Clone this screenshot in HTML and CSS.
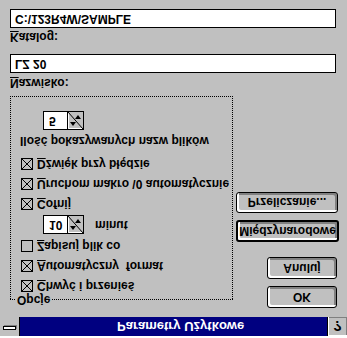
FILE: index.html
```html
<!DOCTYPE html>
<html lang="pl">
<head>
<meta charset="utf-8">
<title>Parametry Użytkowe</title>
<link rel="stylesheet" href="styles.css">
</head>
<body>
<div class="dialog">
  <div class="frame-top"></div>
  <div class="titlebar">
    <div class="sysmenu"><span class="sysbar"></span></div>
    <div class="caption">Parametry Użytkowe</div>
    <div class="help">?</div>
  </div>
  <div class="body">
    <div class="top-row">
      <fieldset class="group">
        <legend>Opcje</legend>
        <div class="group-body">
          <div class="check">
            <svg class="cb" width="12" height="12" viewBox="0 0 12 12"><rect x=".5" y=".5" width="11" height="11" fill="none" stroke="#000"/><path d="M1 1L11 11M11 1L1 11" stroke="#000"/></svg>
            <span><u>C</u>hwyć i przenieś</span>
          </div>
          <div class="check">
            <svg class="cb" width="12" height="12" viewBox="0 0 12 12"><rect x=".5" y=".5" width="11" height="11" fill="none" stroke="#000"/><path d="M1 1L11 11M11 1L1 11" stroke="#000"/></svg>
            <span><u>A</u>utomatyczny&nbsp; format</span>
          </div>
          <div class="check">
            <svg class="cb" width="12" height="12" viewBox="0 0 12 12"><rect x=".5" y=".5" width="11" height="11" fill="none" stroke="#000"/></svg>
            <span><u>Z</u>apisuj plik co</span>
          </div>
          <div class="spin-row">
            <div class="spin">
              <span class="spin-val">10</span>
              <svg class="spin-btn" width="17" height="19" viewBox="0 0 17 19"><rect x=".5" y=".5" width="16" height="18" fill="#c0c0c0" stroke="#000"/><path d="M1.5 17.5V1.5H15.5" fill="none" stroke="#fff"/><path d="M1 18L16 1" stroke="#000"/><path d="M3 8L6 4L9 8Z" fill="#000"/><path d="M8 11H14L11 15Z" fill="#000"/></svg>
            </div>
            <span class="unit">minut</span>
          </div>
          <div class="check">
            <svg class="cb" width="12" height="12" viewBox="0 0 12 12"><rect x=".5" y=".5" width="11" height="11" fill="none" stroke="#000"/><path d="M1 1L11 11M11 1L1 11" stroke="#000"/></svg>
            <span><u>C</u>ofnij</span>
          </div>
          <div class="check">
            <svg class="cb" width="12" height="12" viewBox="0 0 12 12"><rect x=".5" y=".5" width="11" height="11" fill="none" stroke="#000"/><path d="M1 1L11 11M11 1L1 11" stroke="#000"/></svg>
            <span><u>U</u>ruchom makro \0 automatycznie</span>
          </div>
          <div class="check">
            <svg class="cb" width="12" height="12" viewBox="0 0 12 12"><rect x=".5" y=".5" width="11" height="11" fill="none" stroke="#000"/><path d="M1 1L11 11M11 1L1 11" stroke="#000"/></svg>
            <span><u>D</u>źwięk przy błędzie</span>
          </div>
          <div class="count-label">Ilość pokazywanych nazw plików</div>
          <div class="spin count-spin">
            <span class="spin-val">5</span>
            <svg class="spin-btn" width="17" height="19" viewBox="0 0 17 19"><rect x=".5" y=".5" width="16" height="18" fill="#c0c0c0" stroke="#000"/><path d="M1.5 17.5V1.5H15.5" fill="none" stroke="#fff"/><path d="M1 18L16 1" stroke="#000"/><path d="M3 8L6 4L9 8Z" fill="#000"/><path d="M8 11H14L11 15Z" fill="#000"/></svg>
          </div>
        </div>
      </fieldset>
      <div class="buttons">
        <button class="btn btn-ok">OK</button>
        <button class="btn btn-cancel">Anuluj</button>
        <button class="btn btn-default">Międzynarodowe</button>
        <button class="btn btn-recalc">Przeliczanie...</button>
      </div>
    </div>
    <div class="label label-name"><u>N</u>azwisko:</div>
    <div class="field field-name">LZ 20</div>
    <div class="label label-dir"><u>K</u>atalog:</div>
    <div class="field field-dir">C:\123R4W\SAMPLE</div>
  </div>
</div>
</body>
</html>
```
FILE: styles.css
```css
* { box-sizing: border-box; }

html, body {
  margin: 0;
  padding: 0;
  background: #c0c0c0;
}

body {
  width: 347px;
  height: 338px;
  overflow: hidden;
}

.dialog {
  width: 347px;
  height: 338px;
  background: #c0c0c0;
  transform: scaleY(-1);
  font: bold 12px "Liberation Sans", Arial, sans-serif;
  color: #000;
  display: flex;
  flex-direction: column;
}

.frame-top {
  flex: none;
  height: 2px;
  background: #fff;
}

.titlebar {
  flex: none;
  display: flex;
  height: 19px;
}

.sysmenu {
  width: 20px;
  background: #c0c0c0;
  border-right: 1px solid #000;
  display: flex;
  align-items: center;
  justify-content: center;
}

.sysbar {
  width: 13px;
  height: 4px;
  background: #fff;
  border: 1px solid #000;
  box-shadow: 1px 1px 0 #808080;
  margin-top: -3px;
}

.caption {
  flex: 1;
  background: #000080;
  color: #fff;
  font-size: 13px;
  line-height: 19px;
  padding-left: 97px;
  white-space: nowrap;
}

.help {
  width: 20px;
  border-left: 1px solid #000;
  background: #c0c0c0;
  display: flex;
  align-items: center;
  justify-content: center;
  font-size: 14px;
  box-shadow: inset 1px 1px 0 #fff, inset -1px -1px 0 #808080;
}

.body {
  flex: 1;
  display: flex;
  flex-direction: column;
  padding: 0 8px 0 10px;
}

.top-row {
  display: flex;
  margin-top: 9px;
}

.group {
  margin: 2px 0 0;
  padding: 0;
  width: 223px;
  min-width: 0;
  border: 1px dotted #000;
}

.group legend {
  padding: 0 1px;
  margin-left: 5px;
  line-height: 12px;
}

.group-body {
  margin-top: -2px;
  padding: 0 0 14px 10px;
}

.check {
  display: flex;
  align-items: center;
  height: 20px;
  white-space: nowrap;
}

.cb {
  flex: none;
  margin-right: 4px;
}

.spin-row {
  display: flex;
  align-items: center;
  height: 22px;
  padding-left: 22px;
}

.spin {
  display: flex;
  height: 19px;
}

.spin-val {
  width: 24px;
  height: 19px;
  background: #fff;
  border: 1px solid #000;
  border-right: none;
  padding-left: 5px;
  line-height: 17px;
}

.spin-btn {
  flex: none;
  display: block;
}

.unit {
  margin-left: 11px;
}

.count-label {
  margin: 6px 0 0 -1px;
  line-height: 14px;
  white-space: nowrap;
}

.count-spin {
  margin: 4px 0 0 22px;
}

.buttons {
  margin-left: auto;
  width: 106px;
  display: flex;
  flex-direction: column;
  align-items: flex-end;
}

.btn {
  font: inherit;
  color: #000;
  padding: 0;
  border: 1px solid #000;
  border-radius: 3px;
  background: #c0c0c0;
  box-shadow: inset 2px 2px 0 #fff, inset -2px -2px 0 #808080;
  display: flex;
  align-items: center;
  justify-content: center;
  white-space: nowrap;
}

.btn-ok {
  width: 70px;
  height: 22px;
  margin-right: 2px;
}

.btn-cancel {
  width: 70px;
  height: 22px;
  margin-top: 7px;
  margin-right: 2px;
}

.btn-default {
  width: 103px;
  height: 22px;
  margin-top: 15px;
  border-width: 2px;
}

.btn-recalc {
  width: 102px;
  height: 21px;
  margin-top: 7px;
  margin-right: 1px;
}

.label {
  line-height: 14px;
}

.label-name { margin-top: 6px; }
.label-dir { margin-top: 10px; }

.field {
  height: 19px;
  margin-right: 3px;
  background: #fff;
  border: 1px solid #000;
  padding-left: 4px;
  line-height: 17px;
  white-space: nowrap;
}

.field-name { margin-top: 3px; }
.field-dir { margin-top: 2px; }
```
